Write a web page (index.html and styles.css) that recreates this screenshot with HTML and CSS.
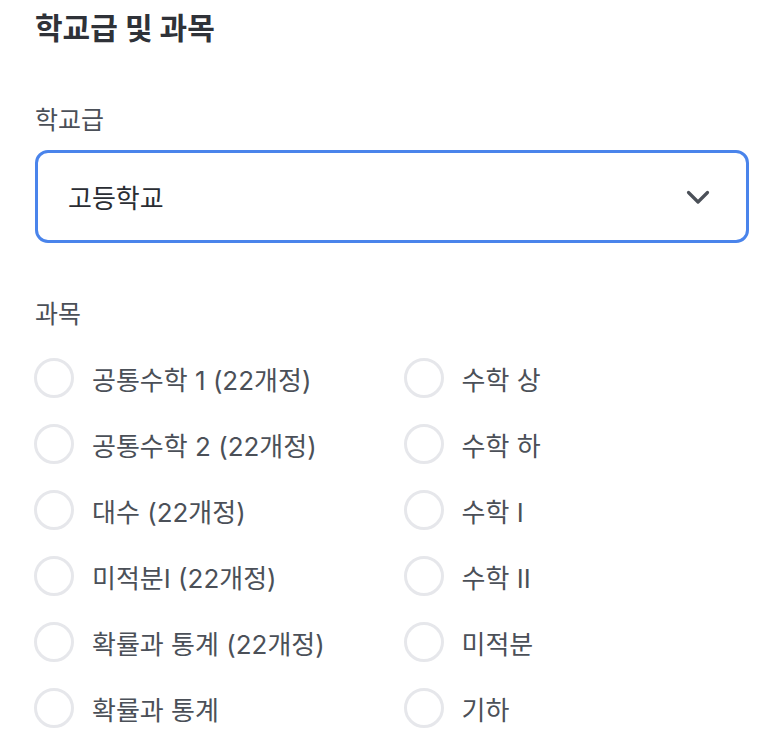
FILE: index.html
```html
<!DOCTYPE html>
<html lang="ko">
<head>
<meta charset="utf-8">
<link rel="stylesheet" href="styles.css">
</head>
<body>
<div class="panel">
  <h2 class="title">학교급 및 과목</h2>
  <div class="field-label first">학교급</div>
  <div class="select">
    <span class="select-value">고등학교</span>
    <svg class="chevron" width="24" height="15" viewBox="0 0 24 15"><polyline points="2.5,2.5 12,12 21.5,2.5" fill="none" stroke="#4b5058" stroke-width="3.2" stroke-linecap="round" stroke-linejoin="round"/></svg>
  </div>
  <div class="field-label second">과목</div>
  <div class="options">
    <label class="option"><span class="radio"></span><span class="opt-text">공통수학 1 (22개정)</span></label>
    <label class="option"><span class="radio"></span><span class="opt-text">수학 상</span></label>
    <label class="option"><span class="radio"></span><span class="opt-text">공통수학 2 (22개정)</span></label>
    <label class="option"><span class="radio"></span><span class="opt-text">수학 하</span></label>
    <label class="option"><span class="radio"></span><span class="opt-text">대수 (22개정)</span></label>
    <label class="option"><span class="radio"></span><span class="opt-text">수학 I</span></label>
    <label class="option"><span class="radio"></span><span class="opt-text">미적분I (22개정)</span></label>
    <label class="option"><span class="radio"></span><span class="opt-text">수학 II</span></label>
    <label class="option"><span class="radio"></span><span class="opt-text">확률과 통계 (22개정)</span></label>
    <label class="option"><span class="radio"></span><span class="opt-text">미적분</span></label>
    <label class="option"><span class="radio"></span><span class="opt-text">확률과 통계</span></label>
    <label class="option"><span class="radio"></span><span class="opt-text">기하</span></label>
  </div>
</div>
</body>
</html>
```

FILE: styles.css
```css
html, body {
  margin: 0;
  padding: 0;
  background: #ffffff;
}
body {
  font-family: "Inter", "Noto Sans CJK KR", "Noto Sans", sans-serif;
  color: #2f3238;
}
.panel {
  padding: 8px 15px 0 35px;
}
.title {
  margin: 0;
  font-size: 30px;
  line-height: 40px;
  font-weight: 700;
  color: #2f3238;
}
.field-label {
  font-size: 25px;
  line-height: 32px;
  color: #4b5058;
}
.field-label.first {
  margin-top: 56px;
}
.field-label.second {
  margin-top: 55px;
}
.select {
  margin-top: 14px;
  height: 93px;
  box-sizing: border-box;
  border: 3px solid #4a84eb;
  border-radius: 13px;
  display: flex;
  align-items: center;
  justify-content: space-between;
  padding: 0 36px 0 30px;
}
.select-value {
  font-size: 26px;
  color: #2a2d33;
}
.chevron {
  display: block;
  margin-top: 2px;
}
.options {
  margin-top: 28px;
  display: grid;
  grid-template-columns: 1fr 1fr;
  column-gap: 24px;
  row-gap: 26px;
  margin-left: -1px;
}
.option {
  display: flex;
  align-items: center;
  height: 40px;
}
.radio {
  width: 40px;
  height: 40px;
  box-sizing: border-box;
  border: 3px solid #e6e7eb;
  border-radius: 50%;
  flex: none;
}
.opt-text {
  margin-left: 18px;
  font-size: 26px;
  color: #4b5058;
}
```
